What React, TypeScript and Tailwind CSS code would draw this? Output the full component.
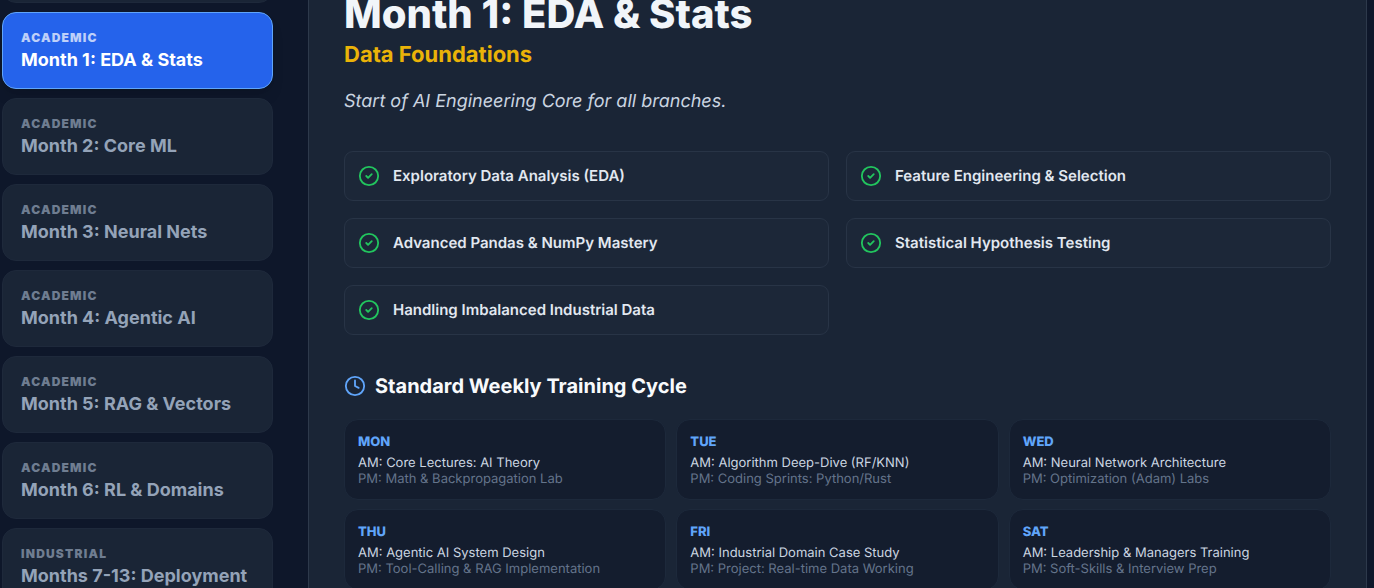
import React, { useState } from 'react';
import { CheckCircle2, Clock } from 'lucide-react';

interface Phase {
  id: number;
  track: string;
  title: string;
}

interface Day {
  name: string;
  am: string;
  pm: string;
}

const phases: Phase[] = [
  { id: 1, track: 'Academic', title: 'Month 1: EDA & Stats' },
  { id: 2, track: 'Academic', title: 'Month 2: Core ML' },
  { id: 3, track: 'Academic', title: 'Month 3: Neural Nets' },
  { id: 4, track: 'Academic', title: 'Month 4: Agentic AI' },
  { id: 5, track: 'Academic', title: 'Month 5: RAG & Vectors' },
  { id: 6, track: 'Academic', title: 'Month 6: RL & Domains' },
  { id: 7, track: 'Industrial', title: 'Months 7-13: Deployment' },
];

const topics = [
  'Exploratory Data Analysis (EDA)',
  'Feature Engineering & Selection',
  'Advanced Pandas & NumPy Mastery',
  'Statistical Hypothesis Testing',
  'Handling Imbalanced Industrial Data',
];

const week: Day[] = [
  { name: 'MON', am: 'Core Lectures: AI Theory', pm: 'Math & Backpropagation Lab' },
  { name: 'TUE', am: 'Algorithm Deep-Dive (RF/KNN)', pm: 'Coding Sprints: Python/Rust' },
  { name: 'WED', am: 'Neural Network Architecture', pm: 'Optimization (Adam) Labs' },
  { name: 'THU', am: 'Agentic AI System Design', pm: 'Tool-Calling & RAG Implementation' },
  { name: 'FRI', am: 'Industrial Domain Case Study', pm: 'Project: Real-time Data Working' },
  { name: 'SAT', am: 'Leadership & Managers Training', pm: 'Soft-Skills & Interview Prep' },
];

const App: React.FC = () => {
  const [activeId, setActiveId] = useState(1);

  return (
    <div className="flex h-screen items-start gap-[35px] overflow-hidden bg-[#0e172a] pl-0.5 pr-[7px] font-['Inter',sans-serif] [text-rendering:geometricPrecision]">
      <nav className="flex w-[271px] shrink-0 flex-col gap-[9px]">
        {/* tail of the card scrolled off the top */}
        <div className="-mt-[74px] h-[77px] shrink-0 rounded-[14px] border border-[#1e293b] bg-[#1a2536]" />
        {phases.map((phase) => (
          <button
            key={phase.id}
            type="button"
            onClick={() => setActiveId(phase.id)}
            className={`shrink-0 rounded-[14px] border px-[18px] py-4 text-left ${
              phase.id === activeId
                ? 'border-[#60a5fa] bg-[#2563eb] text-white shadow-lg'
                : 'border-[#1e293b] bg-[#1a2536] text-[#94a3b8]'
            }`}
          >
            <span className="block text-xs leading-[18px] font-black tracking-widest uppercase opacity-70">{phase.track}</span>
            <span className="block text-lg leading-[25px] font-bold">{phase.title}</span>
          </button>
        ))}
      </nav>

      <main className="min-h-screen min-w-0 flex-1 border-x border-[#2d394b] bg-[#1a2536] px-[35px]">
        <h1 className="-mt-2 text-[40px] leading-[44px] font-extrabold text-[#f1f5f9]">Month 1: EDA & Stats</h1>
        <p className="mt-[5px] text-[22px] leading-7 font-bold text-[#eab308]">Data Foundations</p>
        <p className="mt-[19px] text-lg leading-7 text-[#cbd5e1] italic">Start of AI Engineering Core for all branches.</p>

        <ul className="mt-[35px] grid grid-cols-2 gap-[17px]">
          {topics.map((topic) => (
            <li key={topic} className="flex h-[50px] items-center gap-[13px] rounded-[9px] border border-[#283446] bg-[#1c2738] px-[13px]">
              <CheckCircle2 size={22} className="shrink-0 text-[#22c55e]" />
              <span className="text-[15px] leading-6 font-semibold text-[#e2e8f0]">{topic}</span>
            </li>
          ))}
        </ul>

        <h2 className="mt-[37px] flex items-center gap-[9px] text-xl leading-7 font-bold text-[#f8fafc]">
          <Clock size={22} className="shrink-0 text-[#60a5fa]" />
          Standard Weekly Training Cycle
        </h2>

        <div className="mt-[19px] grid grid-cols-3 gap-x-[10px] gap-y-[9px]">
          {week.map((day) => (
            <section key={day.name} className="rounded-[14px] border border-[#1d293b] bg-[#141d2e] px-[13px] pt-[13px] pb-3">
              <h3 className="text-[13px] leading-[18px] font-extrabold text-[#60a5fa]">{day.name}</h3>
              <p className="mt-1 text-[13px] leading-4 text-[#cbd5e1]">AM: {day.am}</p>
              <p className="text-[13px] leading-4 text-[#64748b]">PM: {day.pm}</p>
            </section>
          ))}
        </div>
      </main>
    </div>
  );
};

export default App;
